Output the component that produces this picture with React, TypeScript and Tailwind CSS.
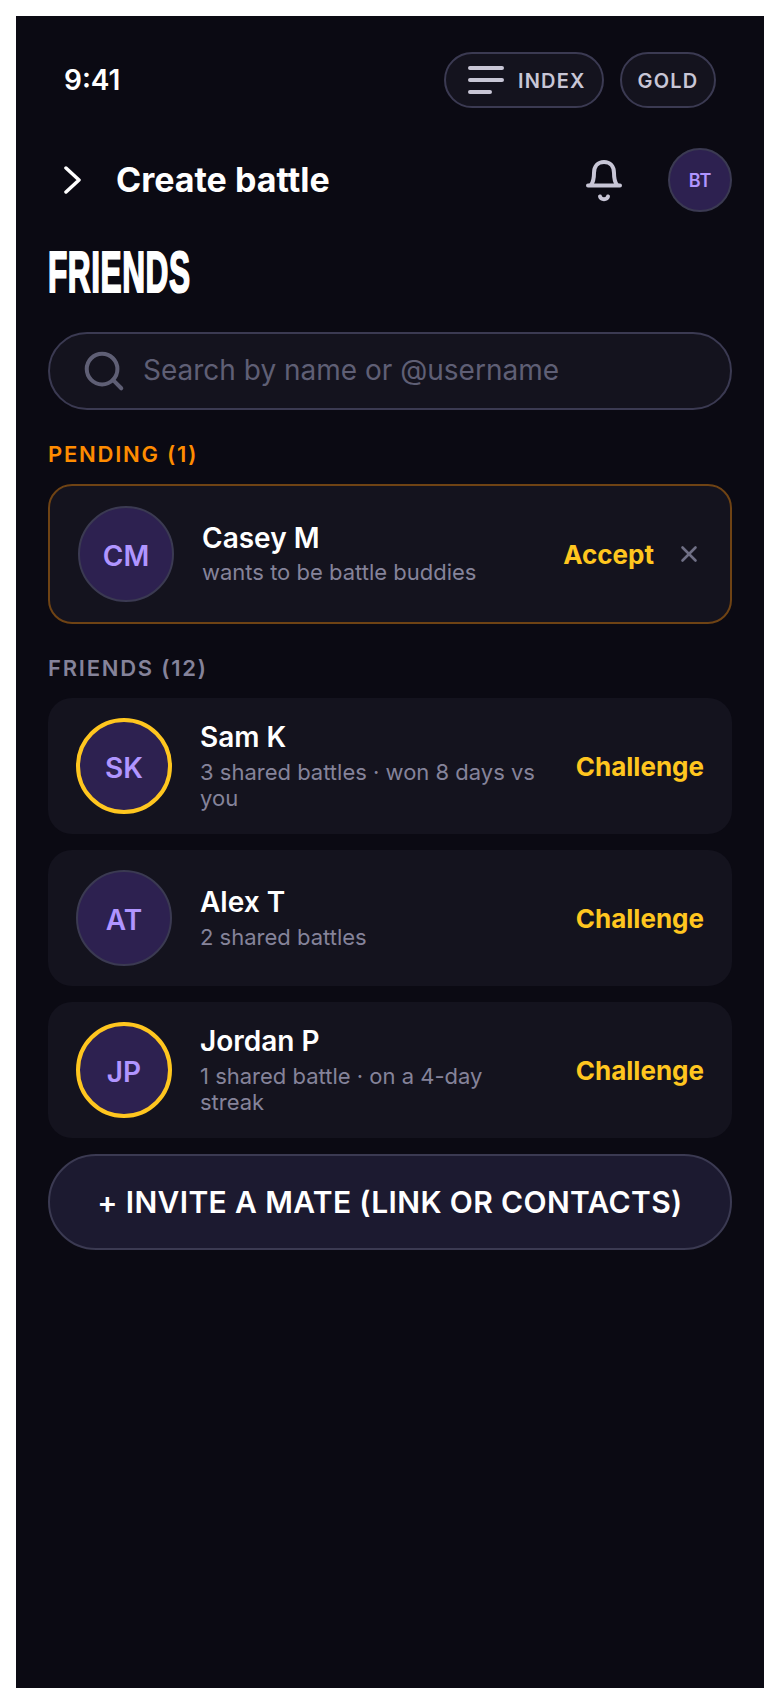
import React from 'react';
import { Search, X } from 'lucide-react';

const friends = [
  { initials: 'SK', name: 'Sam K', sub: '3 shared battles · won 8 days vs you', ring: true },
  { initials: 'AT', name: 'Alex T', sub: '2 shared battles', ring: false },
  { initials: 'JP', name: 'Jordan P', sub: '1 shared battle · on a 4-day streak', ring: true },
];

const Avatar = ({ initials, ring }: { initials: string; ring?: boolean }) => (
  <div
    className={`w-24 h-24 shrink-0 rounded-full bg-[#2d2150] flex items-center justify-center pt-[3px] text-[28px] font-semibold text-[#b095ff] ${
      ring ? 'border-4 border-[#ffc61f]' : 'border-2 border-[#3b3a52]'
    }`}
  >
    {initials}
  </div>
);

const App = () => {
  return (
    <div className="h-[1688px] overflow-hidden bg-white px-4 pt-4 font-['Inter',sans-serif]">
      <div className="h-full bg-[#0b0a13] px-8 pt-9">
        {/* Status bar */}
        <div className="flex items-center justify-between pl-4 pr-4">
          <span className="text-[28px] font-semibold text-white">9:41</span>
          <div className="flex items-center gap-4">
            <div className="h-[56px] w-40 rounded-full border-2 border-[#3b3a52] bg-[#14131e] flex items-center pl-[22px] gap-[14px]">
              <svg width="36" height="28" viewBox="0 0 36 28" fill="none" stroke="#c8c6d6" strokeWidth="4" strokeLinecap="round">
                <path d="M2 2h32M2 14h32M2 26h20" />
              </svg>
              <span className="pt-[2px] text-xl font-semibold tracking-[1.2px] text-[#c8c6d6]">INDEX</span>
            </div>
            <div className="h-[56px] w-24 rounded-full border-2 border-[#3b3a52] bg-[#14131e] flex items-center justify-center">
              <span className="pt-[2px] text-xl font-semibold tracking-[1.2px] text-[#c8c6d6]">GOLD</span>
            </div>
          </div>
        </div>

        {/* Header */}
        <div className="mt-[40px] flex items-center">
          <svg className="ml-4" width="17" height="28" viewBox="0 0 17 28" fill="none" stroke="white" strokeWidth="3.5" strokeLinecap="round" strokeLinejoin="round">
            <path d="M2 2l13 12L2 26" />
          </svg>
          <h1 className="ml-[35px] pb-[2px] flex-1 text-[34px] font-bold text-white">Create battle</h1>
          <svg className="mr-[46px] mt-[2px]" width="36" height="42" viewBox="0 0 36 42" fill="none" stroke="#c8c6d6" strokeWidth="4" strokeLinecap="round" strokeLinejoin="round">
            <path d="M2 25.5h32" />
            <path d="M5 25c3-4 3-8 3-12C8 6 12 2 18 2s10 4 10 11c0 4 0 8 3 12" />
            <path d="M14 36.500c1 3.500 7 3.500 8 0" />
          </svg>
          <div className="w-16 h-16 rounded-full bg-[#2d2150] border-2 border-[#3b3a52] flex items-center justify-center pt-[2px] text-lg font-semibold text-[#b095ff]">
            BT
          </div>
        </div>

        {/* Title */}
        <div className="mt-[26px] h-[68px] flex items-center">
          <h2 className="origin-left scale-x-[0.545] text-[58px] leading-none tracking-[1px] font-bold text-white font-['Liberation_Sans',sans-serif] [-webkit-text-stroke:2px_white]">
            FRIENDS
          </h2>
        </div>

        {/* Search */}
        <div className="mt-[26px] h-[78px] rounded-full border-2 border-[#3b3a52] bg-[#14131e] flex items-center pl-[31px]">
          <Search className="w-[46px] h-[46px] text-[#5f5f75]" strokeWidth={2.1} />
          <span className="ml-[16px] pb-[2px] text-[28px] text-[#5f5f75]">Search by name or @username</span>
        </div>

        {/* Pending */}
        <p className="mt-[28px] text-[22px] font-semibold tracking-[1.76px] text-[#ff8c00]">PENDING (1)</p>
        <div className="mt-[13px] rounded-3xl border-2 border-[#6f4314] bg-[#14131e] px-7 py-5 flex items-center">
          <Avatar initials="CM" />
          <div className="ml-7 flex-1 min-w-0 pb-[3px]">
            <p className="text-[28px] leading-[34px] font-semibold text-white">Casey M</p>
            <p className="mt-[4px] text-[22px] leading-[26px] text-[#85839a]">wants to be battle buddies</p>
          </div>
          <span className="text-[26px] font-bold text-[#ffc61f]">Accept</span>
          <X className="ml-[22px] w-[26px] h-[26px] text-[#6f6f85]" strokeWidth={2.4} />
        </div>

        {/* Friends */}
        <p className="mt-[28px] text-[22px] font-semibold tracking-[1.76px] text-[#85839a]">FRIENDS (12)</p>
        <div className="mt-[13px] flex flex-col gap-4">
          {friends.map((f) => (
            <div key={f.initials} className="rounded-3xl bg-[#14131e] px-7 py-5 flex items-center gap-7">
              <Avatar initials={f.initials} ring={f.ring} />
              <div className="flex-1 min-w-0 pb-[1px]">
                <p className="text-[28px] leading-[34px] font-semibold text-white">{f.name}</p>
                <p className="mt-[5px] text-[22px] leading-[26px] text-[#85839a]">{f.sub}</p>
              </div>
              <span className="text-[26px] font-bold text-[#ffc61f]">Challenge</span>
            </div>
          ))}
          <button className="h-[96px] rounded-full border-2 border-[#3b3a52] bg-[#1c1a30] text-[30px] tracking-[0.36px] font-semibold text-white">
            + INVITE A MATE (LINK OR CONTACTS)
          </button>
        </div>
      </div>
    </div>
  );
};

export default App;
